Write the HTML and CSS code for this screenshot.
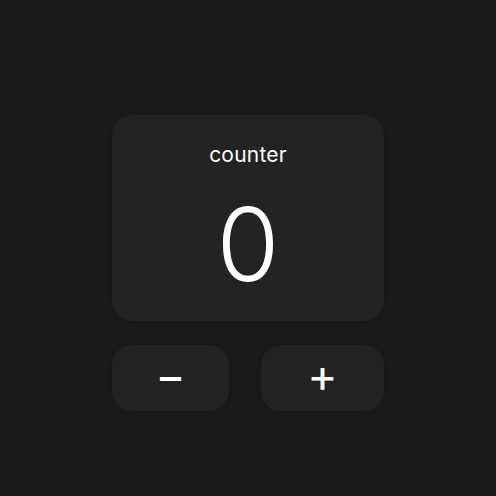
FILE: index.html
```html
<!DOCTYPE html>
<html>
<head>
<meta charset="utf-8">
<link rel="stylesheet" href="styles.css">
</head>
<body>
<main class="app">
  <section class="card">
    <h1 class="title">counter</h1>
    <div class="value">0</div>
  </section>
  <div class="controls">
    <button class="btn btn-minus">−</button>
    <button class="btn btn-plus">+</button>
  </div>
</main>
</body>
</html>
```
FILE: styles.css
```css
html, body {
  margin: 0;
  padding: 0;
  background: #1c1c1c;
  height: 100%;
}
body {
  font-family: "Inter", "Open Sans", sans-serif;
  color: #ffffff;
}
.app {
  width: 272px;
  margin: 0 auto;
  padding-top: 115px;
  display: flex;
  flex-direction: column;
  gap: 24px;
}
.card {
  height: 206px;
  background: #232323;
  border-radius: 20px;
  box-shadow: 0 0 12px rgba(0,0,0,0.25);
  display: flex;
  flex-direction: column;
  align-items: center;
}
.title {
  margin: 28px 0 0;
  font-size: 21px;
  font-weight: 400;
  line-height: 24px;
  letter-spacing: 0.2px;
}
.value {
  margin-top: 17px;
  font-size: 102px;
  font-weight: 300;
  line-height: 120px;
}
.controls {
  display: flex;
  justify-content: space-between;
}
.btn {
  height: 66px;
  border: none;
  border-radius: 20px;
  background: #232323;
  color: #ffffff;
  font-family: "Inter", sans-serif;
  font-size: 46px;
  font-weight: 400;
  line-height: 1;
  box-shadow: 0 0 12px rgba(0,0,0,0.25);
  padding: 0 0 6px;
}
.btn-minus { width: 117px; }
.btn-plus { width: 123px; }
```
